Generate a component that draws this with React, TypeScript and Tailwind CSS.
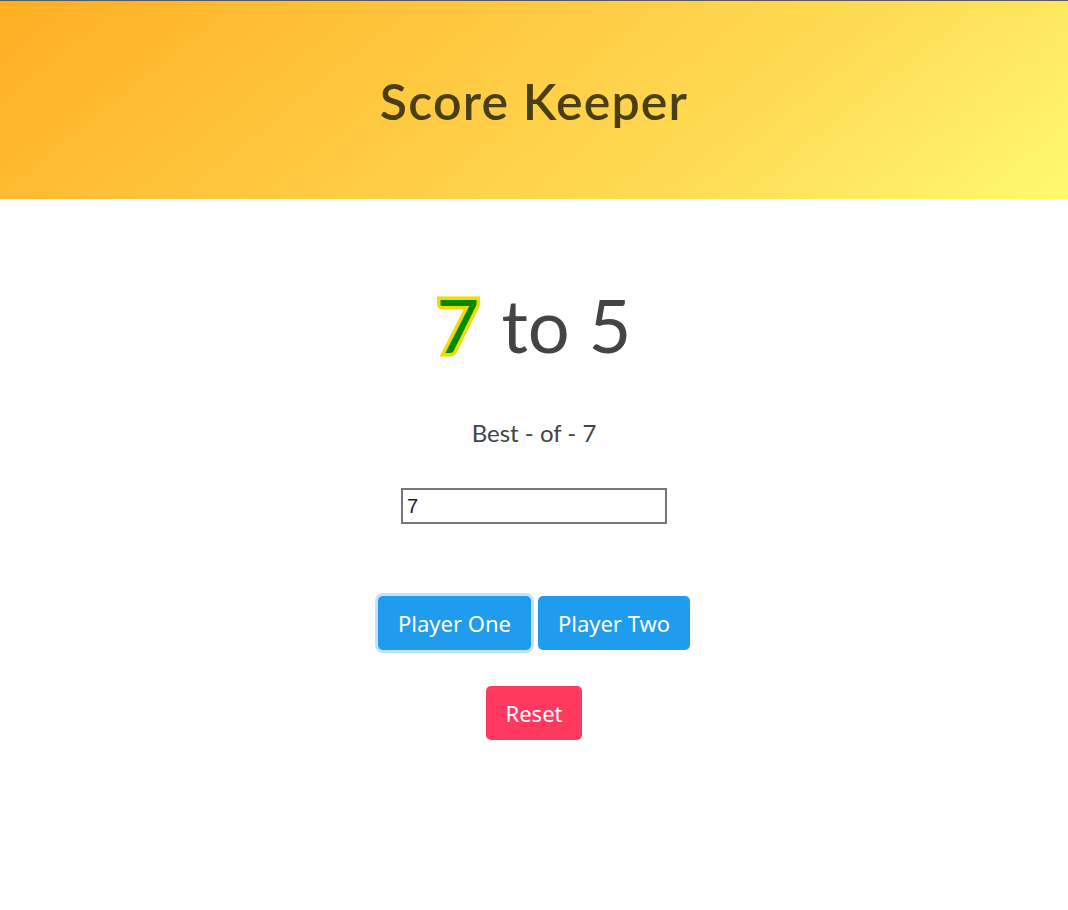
export default function App() {
  const display = '"Lato", "Open Sans", sans-serif';
  const ui = '"Noto Sans", "Open Sans", sans-serif';

  return (
    <div className="min-h-[910px] bg-white" style={{ fontFamily: ui }}>
      <section className="h-[199px] border-t border-[#5a5a5a] bg-[linear-gradient(141deg,#ffaf24_0%,#ffdd57_71%,#fffa70_100%)] flex items-center justify-center">
        <h1
          className="text-[50px] font-semibold text-[#4a3f14] tracking-[1.2px] mt-[2px]"
          style={{ fontFamily: display }}
        >
          Score Keeper
        </h1>
      </section>

      <main className="flex flex-col items-center">
        <h2
          className="mt-[89px] text-[74px] leading-none text-[#444] flex gap-[22px]"
          style={{ fontFamily: display }}
        >
          <span className="text-[#008a00] [-webkit-text-stroke:7px_#f2dc00] [paint-order:stroke_fill]">
            7
          </span>
          <span>to 5</span>
        </h2>

        <p className="mt-[53px] text-[24px] text-[#444]" style={{ fontFamily: display }}>
          Best - of - 7
        </p>

        <input
          type="number"
          defaultValue={7}
          className="mt-[37px] w-[266px] h-[36px] border-2 border-[#767676] px-[4px] text-[20px] text-[#222] outline-none"
          style={{ fontFamily: '"Liberation Sans", Arial, sans-serif' }}
        />

        <div className="mt-[72px] flex gap-[7px]">
          <button className="h-[54px] px-[20px] rounded-[5px] bg-[#209cee] text-white text-[22px] ring-[3px] ring-[#c4e2f8]">
            Player One
          </button>
          <button className="h-[54px] px-[20px] rounded-[5px] bg-[#209cee] text-white text-[22px]">
            Player Two
          </button>
        </div>

        <button className="mt-[36px] h-[54px] px-[20px] rounded-[5px] bg-[#ff3860] text-white text-[22px]">
          Reset
        </button>
      </main>
    </div>
  );
}
